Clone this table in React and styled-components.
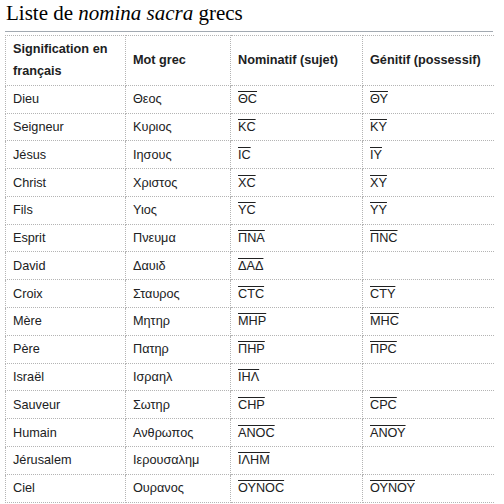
import React from 'react';
import styled, { createGlobalStyle } from 'styled-components';

const GlobalStyle = createGlobalStyle`
  body {
    margin: 0;
    background: #ffffff;
    font-family: "Liberation Sans", Arial, sans-serif;
    color: #202122;
  }
`;

const Page = styled.div`
  width: 488px;
  margin-left: 5px;
`;

const Heading = styled.h2`
  margin: 0;
  padding: 0 0 4px 1px;
  font-family: "Liberation Serif", "Times New Roman", serif;
  font-weight: 400;
  font-size: 21px;
  line-height: 27px;
  color: #000;
  border-bottom: 1px solid #a2a9b1;
`;

const Table = styled.table`
  margin-top: 3px;
  width: 488px;
  border-collapse: collapse;
  table-layout: fixed;
  font-size: 12.7px;
  line-height: 22px;
`;

const Col = styled.col`
  width: ${({ w }) => w}px;
`;

const Head = styled.th`
  text-align: left;
  font-weight: 700;
  padding: 2.4px 7px;
  border: 1px dotted #b4b4b4;
  border-right: ${({ last }) => (last ? 'none' : '1px dotted #b4b4b4')};
`;

const Cell = styled.td`
  padding: 2.4px 7px;
  border: 1px dotted #b4b4b4;
  border-right: ${({ last }) => (last ? 'none' : '1px dotted #b4b4b4')};
  white-space: nowrap;
`;

const Abbr = styled.span`
  text-decoration: overline;
`;

const rows = [
  ['Dieu', 'Θεος', 'ΘC', 'ΘΥ'],
  ['Seigneur', 'Κυριος', 'KC', 'KΥ'],
  ['Jésus', 'Ιησους', 'IC', 'IΥ'],
  ['Christ', 'Χριστος', 'XC', 'XΥ'],
  ['Fils', 'Υιος', 'ΥC', 'ΥΥ'],
  ['Esprit', 'Πνευμα', 'ΠΝΑ', 'ΠΝC'],
  ['David', 'Δαυιδ', 'ΔΑΔ', ''],
  ['Croix', 'Σταυρος', 'CTC', 'CTΥ'],
  ['Mère', 'Μητηρ', 'ΜΗΡ', 'ΜΗC'],
  ['Père', 'Πατηρ', 'ΠΗΡ', 'ΠΡC'],
  ['Israël', 'Ισραηλ', 'ΙΗΛ', ''],
  ['Sauveur', 'Σωτηρ', 'CΗΡ', 'CΡC'],
  ['Humain', 'Ανθρωπος', 'ΑΝΟC', 'ΑΝΟΥ'],
  ['Jérusalem', 'Ιερουσαλημ', 'ΙΛΗΜ', ''],
  ['Ciel', 'Ουρανος', 'ΟΥΝΟC', 'ΟΥΝΟΥ'],
];

const App = () => {
  return (
    <Page>
      <GlobalStyle />
      <Heading>
        Liste de <i>nomina sacra</i> grecs
      </Heading>
      <Table>
        <colgroup>
          <Col w={120} />
          <Col w={105} />
          <Col w={132} />
          <Col w={131} />
        </colgroup>
        <thead>
          <tr>
            <Head>Signification en français</Head>
            <Head>Mot grec</Head>
            <Head>Nominatif (sujet)</Head>
            <Head last>Génitif (possessif)</Head>
          </tr>
        </thead>
        <tbody>
          {rows.map(([fr, gr, nom, gen]) => (
            <tr key={fr}>
              <Cell>{fr}</Cell>
              <Cell>{gr}</Cell>
              <Cell><Abbr>{nom}</Abbr></Cell>
              <Cell last>{gen && <Abbr>{gen}</Abbr>}</Cell>
            </tr>
          ))}
        </tbody>
      </Table>
    </Page>
  );
};

export default App;
